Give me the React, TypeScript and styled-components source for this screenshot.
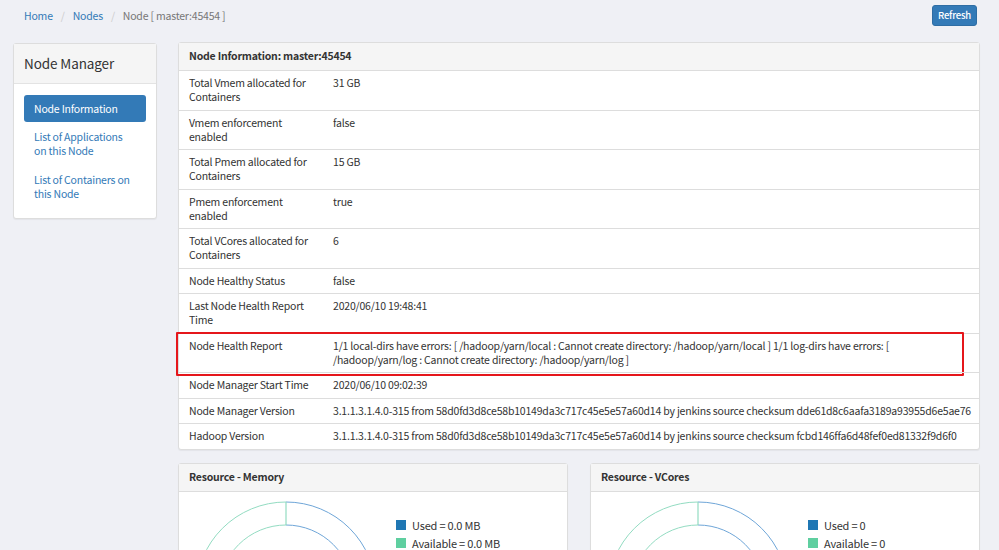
import React from 'react';
import styled, { createGlobalStyle } from 'styled-components';

const GlobalStyle = createGlobalStyle`
  html, body { margin: 0; padding: 0; }
  body {
    background: #eff0f5;
    font-family: "Noto Sans CJK SC", "Liberation Sans", sans-serif;
    font-size: 10.5px;
    letter-spacing: -0.2px;
    color: #333;
  }
  * { box-sizing: border-box; }
`;

const Page = styled.div`
  padding: 0 19px 0 13px;
`;

const TopBar = styled.div`
  height: 42px;
  display: flex;
  align-items: flex-start;
  justify-content: space-between;
`;

const Breadcrumb = styled.ol`
  list-style: none;
  margin: 0;
  padding: 9px 0 0 11px;
  display: flex;
  line-height: 14px;
`;

const Crumb = styled.li<{ $active?: boolean }>`
  color: ${(p) => (p.$active ? '#777' : '#337ab7')};
  &:not(:first-child)::before {
    content: '/';
    color: #ccc;
    padding: 0 8px;
  }
`;

const RefreshButton = styled.button`
  margin: 5px 3px 0 0;
  height: 21px;
  width: 45px;
  padding: 0;
  background: #337ab7;
  border: 1px solid #2e6da4;
  border-radius: 3px;
  color: #fff;
  font-family: inherit;
  font-size: 9.5px;
  letter-spacing: -0.2px;
  font-weight: 500;
  line-height: 19px;
`;

const Columns = styled.div`
  display: flex;
  align-items: flex-start;
  gap: 21px;
`;

const Panel = styled.div`
  background: #fff;
  border: 1px solid #ddd;
  border-radius: 3px;
  box-shadow: 0 1px 1px rgba(0, 0, 0, 0.05);
`;

const Sidebar = styled(Panel)`
  width: 144px;
  flex: none;
  margin-top: 1px;
`;

const SidebarHeading = styled.div`
  background: #f5f5f5;
  border-bottom: 1px solid #e3e3e3;
  padding: 11px 10px 12px;
  font-size: 13.5px;
  letter-spacing: -0.1px;
  line-height: 16px;
  color: #333;
`;

const NavList = styled.div`
  padding: 11px 10px 10px;
  display: flex;
  flex-direction: column;
`;

const NavItem = styled.div<{ $active?: boolean }>`
  border-radius: 3px;
  padding: ${(p) => (p.$active ? '6.5px 10px' : '7.5px 10px')};
  line-height: 14px;
  background: ${(p) => (p.$active ? '#337ab7' : 'transparent')};
  color: ${(p) => (p.$active ? '#fff' : '#337ab7')};
`;

const Main = styled.div`
  flex: 1;
  min-width: 0;
  display: flex;
  flex-direction: column;
  gap: 13px;
`;

const PanelHeading = styled.div`
  background: #f5f5f5;
  border-bottom: 1px solid #ddd;
  padding: 6px 10px 7px;
  line-height: 14px;
  font-weight: bold;
  color: #333;
`;

const InfoRow = styled.div<{ $flagged?: boolean }>`
  position: relative;
  display: grid;
  grid-template-columns: 154px 1fr;
  line-height: 14px;
  & + & {
    border-top: 1px solid #ddd;
  }
  ${(p) =>
    p.$flagged &&
    `
    &::after {
      content: '';
      position: absolute;
      top: -1.5px;
      left: -3px;
      right: 15px;
      bottom: -4px;
      border: 2px solid #e5161b;
      border-radius: 1px;
    }
  `}
`;

const Label = styled.div`
  padding: 5px 11px 5.5px 10px;
`;

const Value = styled.div`
  padding: 5px 6px 5.5px 0;
`;

const ResourceRow = styled.div`
  display: grid;
  grid-template-columns: 1fr 1fr;
  gap: 22px;
`;

const ChartBody = styled.div`
  display: flex;
  align-items: flex-start;
  gap: 13px;
  padding: 9px 10px;
`;

const Legend = styled.div`
  margin-top: 19px;
  display: flex;
  flex-direction: column;
  gap: 7px;
`;

const LegendItem = styled.div`
  display: flex;
  align-items: center;
  gap: 6px;
  height: 11px;
  line-height: 11px;
  font-size: 11px;
  color: #333;
`;

const Swatch = styled.span<{ $color: string }>`
  width: 10px;
  height: 10px;
  background: ${(p) => p.$color};
`;

const rows: { label: string; value: string; flagged?: boolean }[] = [
  { label: 'Total Vmem allocated for Containers', value: '31 GB' },
  { label: 'Vmem enforcement enabled', value: 'false' },
  { label: 'Total Pmem allocated for Containers', value: '15 GB' },
  { label: 'Pmem enforcement enabled', value: 'true' },
  { label: 'Total VCores allocated for Containers', value: '6' },
  { label: 'Node Healthy Status', value: 'false' },
  { label: 'Last Node Health Report Time', value: '2020/06/10 19:48:41' },
  {
    label: 'Node Health Report',
    value:
      '1/1 local-dirs have errors: [ /hadoop/yarn/local : Cannot create directory: /hadoop/yarn/local ] 1/1 log-dirs have errors: [ /hadoop/yarn/log : Cannot create directory: /hadoop/yarn/log ]',
    flagged: true,
  },
  { label: 'Node Manager Start Time', value: '2020/06/10 09:02:39' },
  {
    label: 'Node Manager Version',
    value:
      '3.1.1.3.1.4.0-315 from 58d0fd3d8ce58b10149da3c717c45e5e57a60d14 by jenkins source checksum dde61d8c6aafa3189a93955d6e5ae76',
  },
  {
    label: 'Hadoop Version',
    value:
      '3.1.1.3.1.4.0-315 from 58d0fd3d8ce58b10149da3c717c45e5e57a60d14 by jenkins source checksum fcbd146ffa6d48fef0ed81332f9d6f0',
  },
];

const Donut = () => (
  <svg width="194" height="200" viewBox="0 0 194 200">
    <g fill="none" strokeWidth="1">
      <path d="M97 1 A90 90 0 0 1 97 181" stroke="#6fa6d8" />
      <path d="M97 181 A90 90 0 0 1 97 1" stroke="#93dcc2" />
      <path d="M97 24 A67 67 0 0 1 97 158" stroke="#6fa6d8" />
      <path d="M97 158 A67 67 0 0 1 97 24" stroke="#93dcc2" />
      <path d="M97 1 L97 24" stroke="#93dcc2" strokeWidth="1.2" />
    </g>
  </svg>
);

const ResourcePanel = ({ title, used, available }: { title: string; used: string; available: string }) => (
  <Panel>
    <PanelHeading>{title}</PanelHeading>
    <ChartBody>
      <Donut />
      <Legend>
        <LegendItem>
          <Swatch $color="#1f77b4" />
          Used = {used}
        </LegendItem>
        <LegendItem>
          <Swatch $color="#5fcfa0" />
          Available = {available}
        </LegendItem>
      </Legend>
    </ChartBody>
  </Panel>
);

export default function App() {
  return (
    <>
      <GlobalStyle />
      <Page>
        <TopBar>
          <Breadcrumb>
            <Crumb>Home</Crumb>
            <Crumb>Nodes</Crumb>
            <Crumb $active>Node [ master:45454 ]</Crumb>
          </Breadcrumb>
          <RefreshButton>Refresh</RefreshButton>
        </TopBar>
        <Columns>
          <Sidebar>
            <SidebarHeading>Node Manager</SidebarHeading>
            <NavList>
              <NavItem $active>Node Information</NavItem>
              <NavItem>List of Applications on this Node</NavItem>
              <NavItem>List of Containers on this Node</NavItem>
            </NavList>
          </Sidebar>
          <Main>
            <Panel>
              <PanelHeading>Node Information: master:45454</PanelHeading>
              {rows.map((r) => (
                <InfoRow key={r.label} $flagged={r.flagged}>
                  <Label>{r.label}</Label>
                  <Value>{r.value}</Value>
                </InfoRow>
              ))}
            </Panel>
            <ResourceRow>
              <ResourcePanel title="Resource - Memory" used="0.0 MB" available="0.0 MB" />
              <ResourcePanel title="Resource - VCores" used="0" available="0" />
            </ResourceRow>
          </Main>
        </Columns>
      </Page>
    </>
  );
}
